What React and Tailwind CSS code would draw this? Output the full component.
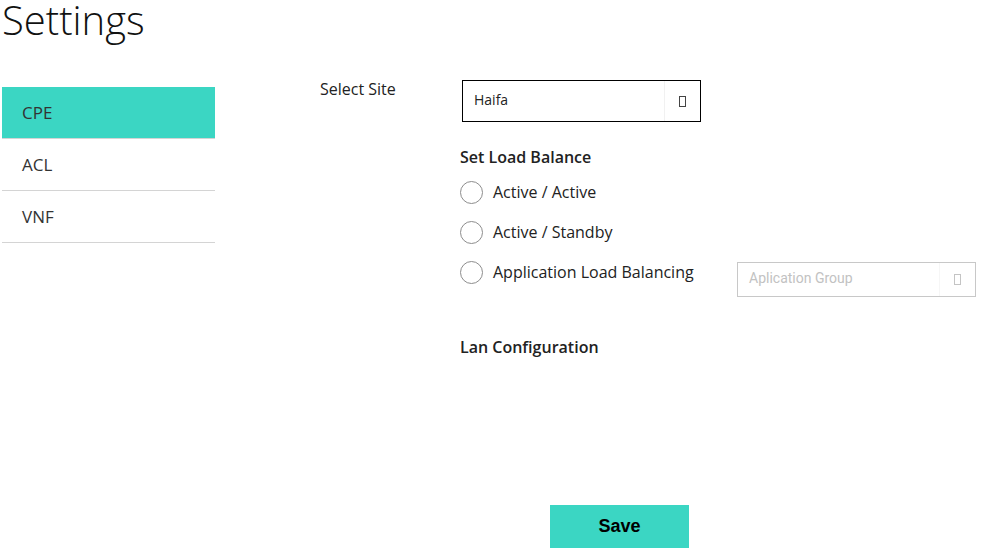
const menu = ["CPE", "ACL", "VNF"];
const options = ["Active / Active", "Active / Standby"];

const Tofu = ({ className }) => (
  <span className={`block w-[7px] h-[11px] border ${className}`} />
);

const App = () => {
  return (
    <div className="w-full h-[555px] bg-white font-['Open_Sans',sans-serif] text-[#222]">
      <h1 className="pl-[2px] -mt-[2px] text-[40px] leading-[44px] font-light text-[#111]">
        Settings
      </h1>

      <div className="flex mt-[38px]">
        <ul className="w-[213px] ml-[2px] mt-[7px]">
          {menu.map((item, i) => (
            <li
              key={item}
              className={`h-[52px] flex items-center pl-[20px] text-[17px] text-[#333] border-b border-[#d4d4d4] ${
                i === 0 ? "bg-[#3bd6c3]" : ""
              }`}
            >
              {item}
            </li>
          ))}
        </ul>

        <div className="ml-[105px] flex-1">
          <div className="flex">
            <span className="w-[142px] text-[16px] leading-[18px] text-[#222]">
              Select Site
            </span>
            <div className="w-[239px] h-[42px] border border-black flex items-center">
              <span className="flex-1 pl-[11px] text-[14px] leading-[18px] -mt-[2px]">Haifa</span>
              <span className="w-[36px] h-full border-l border-[#f1f1f1] flex items-center justify-center">
                <Tofu className="border-[#444]" />
              </span>
            </div>
          </div>

          <div className="pl-[140px]">
            <h2 className="mt-[24px] text-[16px] leading-[22px] font-semibold">
              Set Load Balance
            </h2>

            <div className="mt-[4px]">
              {options.map((opt) => (
                <label key={opt} className="h-[40px] flex items-center gap-[10px]">
                  <span className="w-[23px] h-[23px] rounded-full border border-[#8d8d8d]" />
                  <span className="text-[16px]">{opt}</span>
                </label>
              ))}
              <div className="h-[40px] flex items-center">
                <label className="w-[277px] flex items-center gap-[10px]">
                  <span className="w-[23px] h-[23px] rounded-full border border-[#8d8d8d]" />
                  <span className="text-[16px]">Application Load Balancing</span>
                </label>
                <div className="mt-[15px] w-[239px] h-[35px] border border-[#c8c8c8] flex items-center font-['Roboto',sans-serif]">
                  <span className="flex-1 pl-[11px] text-[14px] text-[#c2c2c2] -mt-[2px]">
                    Aplication Group
                  </span>
                  <span className="w-[36px] h-full border-l border-[#f6f6f6] flex items-center justify-center">
                    <Tofu className="border-[#c4c4c4]" />
                  </span>
                </div>
              </div>
            </div>

            <h2 className="mt-[44px] text-[16px] leading-[22px] font-semibold">
              Lan Configuration
            </h2>

            <button className="mt-[147px] ml-[90px] w-[139px] h-[43px] bg-[#3bd6c3] text-black text-[18px] font-bold font-['Liberation_Sans',sans-serif]">
              Save
            </button>
          </div>
        </div>
      </div>
    </div>
  );
};

export default App;
